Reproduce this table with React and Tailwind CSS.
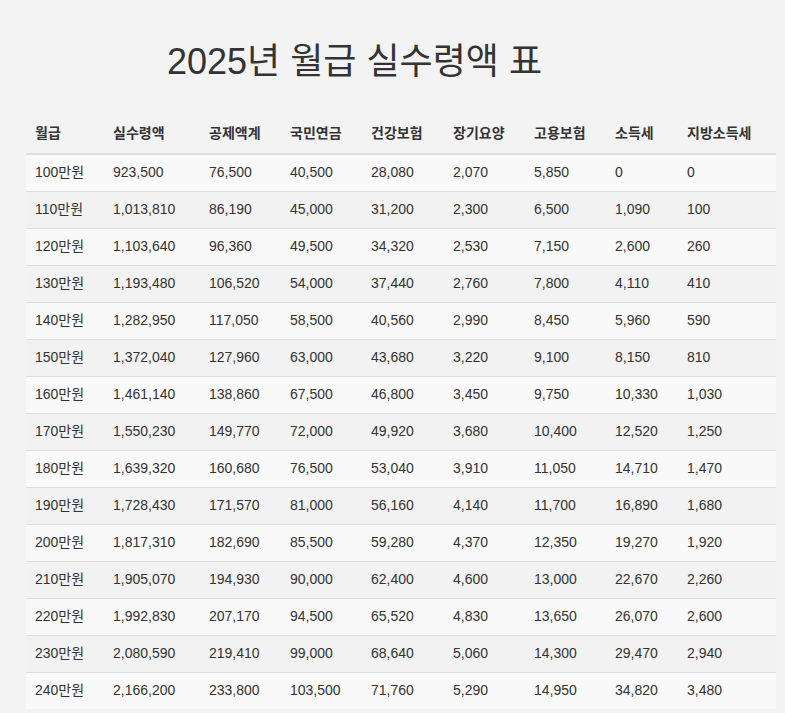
const ROWS = [
  ['100만원', '923,500', '76,500', '40,500', '28,080', '2,070', '5,850', '0', '0'],
  ['110만원', '1,013,810', '86,190', '45,000', '31,200', '2,300', '6,500', '1,090', '100'],
  ['120만원', '1,103,640', '96,360', '49,500', '34,320', '2,530', '7,150', '2,600', '260'],
  ['130만원', '1,193,480', '106,520', '54,000', '37,440', '2,760', '7,800', '4,110', '410'],
  ['140만원', '1,282,950', '117,050', '58,500', '40,560', '2,990', '8,450', '5,960', '590'],
  ['150만원', '1,372,040', '127,960', '63,000', '43,680', '3,220', '9,100', '8,150', '810'],
  ['160만원', '1,461,140', '138,860', '67,500', '46,800', '3,450', '9,750', '10,330', '1,030'],
  ['170만원', '1,550,230', '149,770', '72,000', '49,920', '3,680', '10,400', '12,520', '1,250'],
  ['180만원', '1,639,320', '160,680', '76,500', '53,040', '3,910', '11,050', '14,710', '1,470'],
  ['190만원', '1,728,430', '171,570', '81,000', '56,160', '4,140', '11,700', '16,890', '1,680'],
  ['200만원', '1,817,310', '182,690', '85,500', '59,280', '4,370', '12,350', '19,270', '1,920'],
  ['210만원', '1,905,070', '194,930', '90,000', '62,400', '4,600', '13,000', '22,670', '2,260'],
  ['220만원', '1,992,830', '207,170', '94,500', '65,520', '4,830', '13,650', '26,070', '2,600'],
  ['230만원', '2,080,590', '219,410', '99,000', '68,640', '5,060', '14,300', '29,470', '2,940'],
  ['240만원', '2,166,200', '233,800', '103,500', '71,760', '5,290', '14,950', '34,820', '3,480'],
]

const HEADS = ['월급', '실수령액', '공제액계', '국민연금', '건강보험', '장기요양', '고용보험', '소득세', '지방소득세']

export default function App() {
  return (
    <div className="min-h-screen bg-[#f3f3f3] text-[#333] font-['Liberation_Sans','Noto_Sans_CJK_KR',sans-serif]">
      {/* Title */}
      <h1 className="pt-[42px] pl-[167px] text-[36px] leading-[40px] font-normal text-[#333]">
        2025년 월급 실수령액 표
      </h1>

      {/* Table */}
      <table className="mt-[32px] ml-[26px] w-[750px] table-fixed border-collapse text-[14px]">
        <colgroup>
          <col className="w-[78px]" />
          <col className="w-[96px]" />
          <col className="w-[81px]" />
          <col className="w-[81px]" />
          <col className="w-[82px]" />
          <col className="w-[81px]" />
          <col className="w-[81px]" />
          <col className="w-[72px]" />
          <col className="w-[98px]" />
        </colgroup>
        <thead>
          <tr className="h-[40px] border-b-2 border-[#dddddd]">
            {HEADS.map(h => (
              <th key={h} className="pl-[9px] text-left font-bold align-middle">{h}</th>
            ))}
          </tr>
        </thead>
        <tbody>
          {ROWS.map((row, i) => (
            <tr key={row[0]} className={`h-[37px] ${i > 0 ? 'border-t border-[#dddddd]' : ''} ${i % 2 === 0 ? 'bg-[#f9f9f9]' : 'bg-[#f2f2f2]'}`}>
              {row.map((cell, j) => (
                <td key={j} className="pl-[9px] align-middle whitespace-nowrap">{cell}</td>
              ))}
            </tr>
          ))}
        </tbody>
      </table>
    </div>
  )
}
